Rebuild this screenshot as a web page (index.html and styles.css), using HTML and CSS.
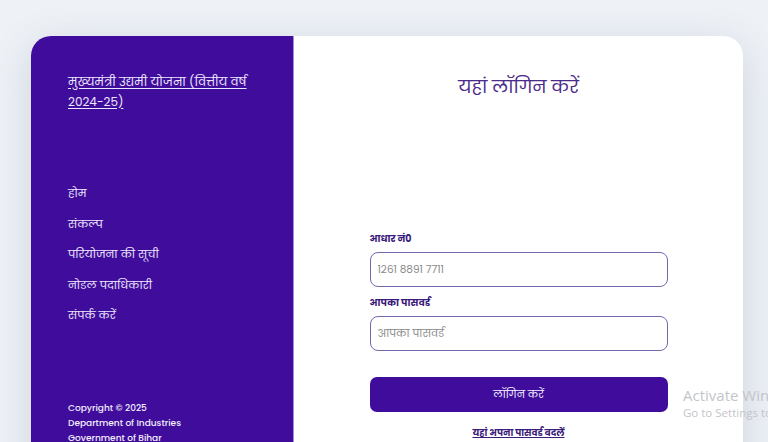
FILE: index.html
```html
<!DOCTYPE html>
<html lang="hi">
<head>
<meta charset="utf-8">
<title>लॉगिन</title>
<link rel="stylesheet" href="styles.css">
</head>
<body>
<div class="card">
  <aside class="sidebar">
    <a class="brand" href="#">मुख्यमंत्री उद्यमी योजना (वित्तीय वर्ष 2024-25)</a>
    <nav class="nav">
      <a href="#">होम</a>
      <a href="#">संकल्प</a>
      <a href="#">परियोजना की सूची</a>
      <a href="#">नोडल पदाधिकारी</a>
      <a href="#">संपर्क करें</a>
    </nav>
    <div class="foot">
      <p>Copyright © 2025</p>
      <p>Department of Industries</p>
      <p>Government of Bihar</p>
    </div>
  </aside>
  <main class="panel">
    <h1 class="title">यहां लॉगिन करें</h1>
    <form class="form">
      <label class="label">आधार नं0</label>
      <input class="input" type="text" placeholder="1261 8891 7711">
      <label class="label">आपका पासवर्ड</label>
      <input class="input" type="password" placeholder="आपका पासवर्ड">
      <button class="btn" type="button">लॉगिन करें</button>
      <a class="change" href="#">यहां अपना पासवर्ड बदलें</a>
    </form>
  </main>
</div>
<div class="watermark">
  <div class="wm1">Activate Windows</div>
  <div class="wm2">Go to Settings to activate Windows.</div>
</div>
</body>
</html>
```
FILE: styles.css
```css
html, body { margin: 0; padding: 0; }
body {
  background: #eef2f7;
  font-family: "Poppins", "Noto Sans", "Noto Sans Devanagari", sans-serif;
  width: 768px;
  height: 442px;
  overflow: hidden;
  position: relative;
}
.card {
  margin: 36px 0 0 31px;
  width: 712px;
  height: 460px;
  display: flex;
  border-radius: 20px;
  overflow: hidden;
  background: #fff;
  box-shadow: 0 10px 40px rgba(60, 70, 100, 0.18);
}
.sidebar {
  width: 263px;
  background: #400c9c;
  border-right: 1px solid #a98ae0;
  padding: 36px 0 0 37px;
  box-sizing: border-box;
  display: flex;
  flex-direction: column;
  color: #ece6fb;
}
.brand {
  color: #ece6fb;
  font-size: 12px;
  line-height: 19.5px;
  text-decoration: underline;
  text-underline-offset: 2px;
  width: 186px;
}
.nav {
  display: flex;
  flex-direction: column;
  gap: 13px;
  margin-top: 74px;
}
.nav a {
  color: #ece6fb;
  text-decoration: none;
  font-size: 11.2px;
  line-height: 17.5px;
}
.foot {
  margin-top: 76px;
}
.foot p {
  margin: 0;
  font-size: 9px;
  line-height: 15px;
  font-weight: 500;
  color: #f2eefc;
}
.panel {
  flex: 1;
  display: flex;
  flex-direction: column;
  align-items: center;
  padding-top: 37px;
}
.title {
  margin: 0;
  font-size: 18px;
  line-height: 28px;
  font-weight: 400;
  color: #4b2c8c;
}
.form {
  width: 298px;
  display: flex;
  flex-direction: column;
  margin-top: 131px;
}
.label {
  font-size: 9.5px;
  font-weight: 700;
  color: #3a1a7a;
  line-height: 14px;
  margin-bottom: 6px;
}
.input {
  height: 35px;
  box-sizing: border-box;
  border: 1px solid #7566b0;
  border-radius: 8px;
  padding: 0 7px;
  font-family: inherit;
  font-size: 10.5px;
  margin-bottom: 9px;
  outline: none;
}
.input::placeholder { color: #8a8a8a; }
.btn {
  margin-top: 17px;
  height: 35px;
  border: none;
  border-radius: 7px;
  background: #400c9c;
  color: #f4f0ff;
  font-family: inherit;
  font-size: 10.5px;
}
.change {
  align-self: center;
  margin-top: 15px;
  font-size: 9px;
  font-weight: 700;
  color: #3a1a7a;
  text-decoration: underline;
}
.watermark {
  position: absolute;
  left: 683px;
  top: 385px;
  color: #c3c5c9;
  font-family: "Open Sans", sans-serif;
  white-space: nowrap;
}
.wm1 { font-size: 15px; line-height: 20px; }
.wm2 { font-size: 11.5px; line-height: 15px; }
```
